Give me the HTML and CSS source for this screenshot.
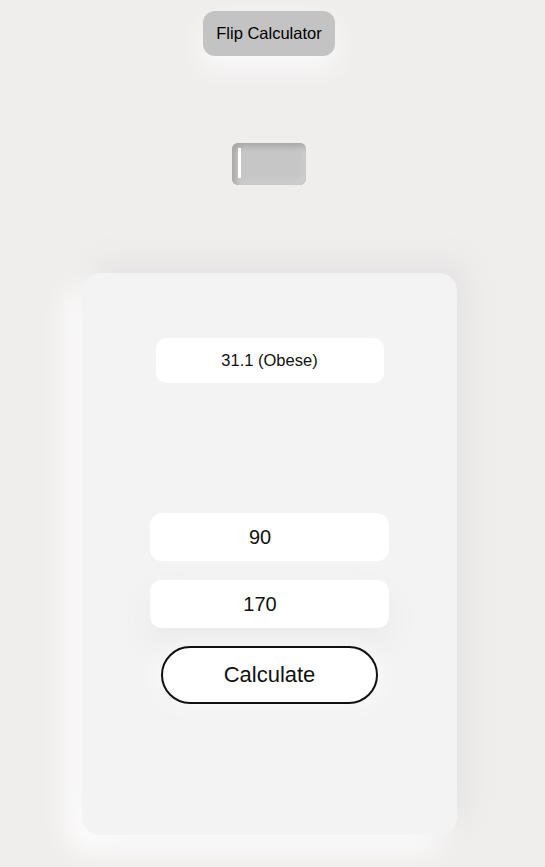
FILE: index.html
```html
<!DOCTYPE html>
<html>
<head>
<meta charset="utf-8">
<link rel="stylesheet" href="styles.css">
</head>
<body>
<main class="page">
  <button class="flip-btn">Flip Calculator</button>
  <div class="toggle"><span class="caret"></span></div>
  <section class="card">
    <div class="result">31.1 (Obese)</div>
    <div class="form">
      <div class="field">90</div>
      <div class="field">170</div>
      <button class="calc-btn">Calculate</button>
    </div>
  </section>
</main>
</body>
</html>
```
FILE: styles.css
```css
html, body {
  margin: 0;
  padding: 0;
  background: #f0eeed;
  font-family: "Liberation Sans", Arial, sans-serif;
  color: #000;
}
.page {
  width: 539px;
  height: 867px;
  display: flex;
  flex-direction: column;
  align-items: center;
  padding-top: 11px;
  box-sizing: border-box;
  overflow: hidden;
}
.flip-btn {
  width: 132px;
  height: 45px;
  margin-right: 1px;
  border: none;
  border-radius: 12px;
  background: #c3c3c3;
  font-family: inherit;
  font-size: 16.5px;
  color: #000;
  padding: 0;
  box-shadow: 0 12px 24px #fafafa;
}
.toggle {
  margin-top: 87px;
  margin-right: 1px;
  width: 74px;
  height: 42px;
  border-radius: 6px;
  background: #c6c6c6;
  box-shadow: inset 3px 3px 6px #a2a2a2, inset -3px -3px 6px #d2d2d2;
  box-sizing: border-box;
  padding: 5px 6px;
  display: flex;
}
.caret {
  width: 3px;
  height: 30px;
  background: #fff;
}
.card {
  margin-top: 88px;
  width: 375px;
  height: 562px;
  border-radius: 18px;
  background: #f3f3f3;
  box-shadow: 12px -12px 30px #e4e3e3, -14px 14px 30px #ffffff;
  display: flex;
  flex-direction: column;
  align-items: center;
  padding-top: 65px;
  box-sizing: border-box;
}
.result {
  width: 228px;
  height: 45px;
  border-radius: 10px;
  background: #fff;
  display: flex;
  align-items: center;
  justify-content: center;
  font-size: 16.5px;
  color: #111;
}
.form {
  margin-top: 130px;
  display: flex;
  flex-direction: column;
  align-items: center;
  gap: 19px;
}
.field {
  width: 239px;
  height: 48px;
  border-radius: 12px;
  background: #fff;
  display: flex;
  align-items: center;
  justify-content: center;
  padding-right: 19px;
  box-sizing: border-box;
  font-size: 20px;
  color: #111;
}
.form .field + .field {
  box-shadow: 0 16px 30px #eaeaea;
}
.calc-btn {
  margin-top: -1px;
  width: 217px;
  height: 58px;
  border: 2px solid #111;
  border-radius: 29px;
  background: #fff;
  font-family: inherit;
  font-size: 22px;
  color: #111;
  padding: 0;
  box-shadow: 0 0 24px #fafafa;
}
```
